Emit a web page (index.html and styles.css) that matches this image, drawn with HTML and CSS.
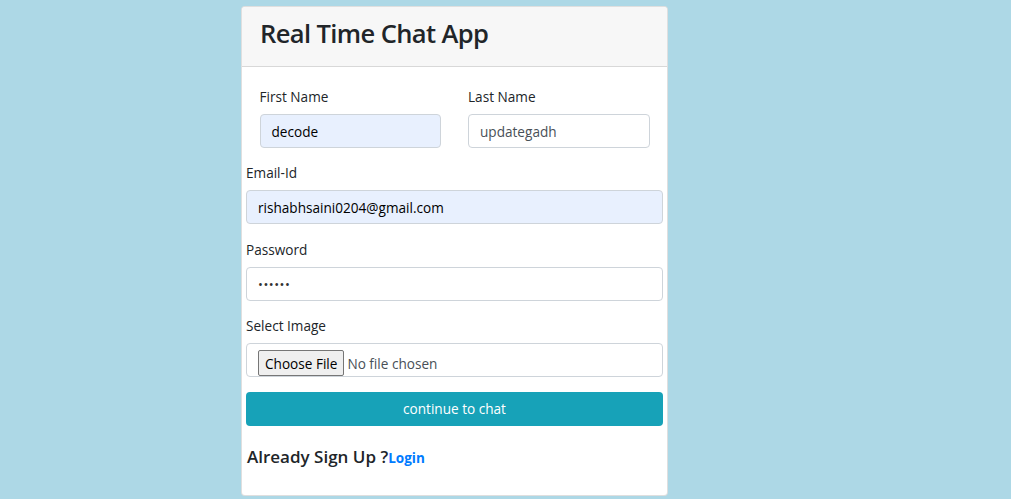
FILE: index.html
```html
<!DOCTYPE html>
<html lang="en">
<head>
<meta charset="utf-8">
<title>Real Time Chat App</title>
<link rel="stylesheet" href="styles.css">
</head>
<body>
<div class="card">
  <div class="card-header">
    <h3 class="title">Real Time Chat App</h3>
  </div>
  <form class="card-body">
    <div class="name-row">
      <div class="col">
        <label class="label">First Name</label>
        <div class="input autofill">decode</div>
      </div>
      <div class="col">
        <label class="label">Last Name</label>
        <div class="input">updategadh</div>
      </div>
    </div>
    <div class="group">
      <label class="label">Email-Id</label>
      <div class="input autofill">rishabhsaini0204@gmail.com</div>
    </div>
    <div class="group">
      <label class="label">Password</label>
      <div class="input password">&bull;&bull;&bull;&bull;&bull;&bull;</div>
    </div>
    <div class="group">
      <label class="label">Select Image</label>
      <div class="input file"><span class="file-btn">Choose File</span><span class="file-text">No file chosen</span></div>
    </div>
    <button type="button" class="submit">continue to chat</button>
    <h5 class="signup">Already Sign Up ?<a class="login" href="#">Login</a></h5>
  </form>
</div>
</body>
</html>
```

FILE: styles.css
```css
html, body {
  margin: 0;
  padding: 0;
}
body {
  background: #add8e6;
  font-family: "Open Sans", "Noto Sans", sans-serif;
  color: #212529;
  font-size: 14px;
  min-height: 499px;
}
.card {
  width: 425px;
  margin: 6px 0 0 241px;
  background: #fff;
  border: 1px solid rgba(0, 0, 0, 0.125);
  border-radius: 4px;
}
.card-header {
  background: #f7f7f7;
  border-bottom: 1px solid rgba(0, 0, 0, 0.125);
  padding: 10px 18px 0;
  height: 49px;
  border-radius: 4px 4px 0 0;
}
.title {
  margin: 0;
  font-size: 25.5px;
  font-weight: 600;
  line-height: 33px;
  letter-spacing: -0.6px;
}
.card-body {
  display: block;
  padding: 19px 4px 18px;
}
.name-row {
  display: grid;
  grid-template-columns: 1fr 1fr;
  margin-bottom: 14.4px;
}
.col {
  padding: 0 13.5px;
}
.group {
  margin-bottom: 14.4px;
}
.label {
  display: block;
  line-height: 21px;
  margin-bottom: 7px;
  font-size: 13.6px;
}
.input {
  box-sizing: border-box;
  height: 34px;
  border: 1px solid #ced4da;
  border-radius: 4px;
  padding: 0 11px;
  display: flex;
  align-items: center;
  font-size: 13.6px;
  color: #495057;
  background: #fff;
}
.autofill {
  background: #e8f0fe;
  color: #000;
}
.password {
  color: #333;
  font-size: 13px;
  letter-spacing: 0.5px;
}
.file {
  gap: 3px;
  padding-top: 6px;
}
.file-btn {
  box-sizing: border-box;
  height: 26px;
  padding: 0 6px;
  display: flex;
  align-items: center;
  background: #efefef;
  border: 1px solid #767676;
  border-radius: 2px;
  color: #000;
}
.file-text {
  color: #495057;
}
.submit {
  display: block;
  width: 100%;
  height: 34px;
  border: none;
  border-radius: 4px;
  background: #17a2b8;
  color: #fff;
  font-family: inherit;
  font-size: 13.6px;
  margin: 0 0 20px;
  padding: 0;
}
.signup {
  margin: 0 0 8px;
  font-size: 17px;
  font-weight: 600;
  line-height: 22px;
  padding-left: 1px;
}
.login {
  color: #007bff;
  font-weight: 700;
  font-size: 13.5px;
  text-decoration: none;
}
```
